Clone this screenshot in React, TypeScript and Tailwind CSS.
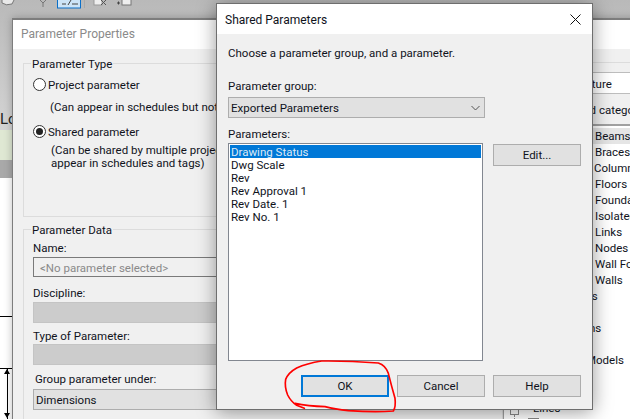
import React from "react";

const F = "font-['Roboto',sans-serif] text-[11.5px] leading-[13px] text-[#10131c]";

function Chevron({ className = "" }: { className?: string }) {
  return (
    <svg width="9" height="6" viewBox="0 0 9 6" className={className}>
      <path d="M.5 1l4 4 4-4" fill="none" stroke="#555" strokeWidth="1" />
    </svg>
  );
}

function Combo({ label, disabled }: { label?: string; disabled?: boolean }) {
  return (
    <div className={`h-[21px] w-full flex items-center pl-[2px] pt-[2px] border ${disabled ? "bg-[#cccccc] border-[#c4c4c4]" : "bg-[#e1e1e1] border-[#adadad]"}`}>
      <span>{label}</span>
    </div>
  );
}

function Btn({ label, ok }: { label: string; ok?: boolean }) {
  return (
    <div className={`w-[88px] h-[22px] flex items-center justify-center bg-[#e1e1e1] ${ok ? "border-2 border-[#0078d7]" : "border border-[#adadad]"}`}>
      {label}
    </div>
  );
}

function Radio({ on }: { on?: boolean }) {
  return (
    <span className="w-[13px] h-[13px] rounded-full border border-[#333] bg-white flex items-center justify-center shrink-0">
      {on && <span className="w-[7px] h-[7px] rounded-full bg-[#222]" />}
    </span>
  );
}

const treeRows: { t: string; pl: string; sel?: boolean }[] = [
  { t: "Beams", pl: "pl-[91px]", sel: true },
  { t: "Braces", pl: "pl-[91px]" },
  { t: "Columns", pl: "pl-[90px]" },
  { t: "Floors", pl: "pl-[91px]" },
  { t: "Foundation", pl: "pl-[91px]" },
  { t: "Isolated", pl: "pl-[91px]" },
  { t: "Links", pl: "pl-[91px]" },
  { t: "Nodes", pl: "pl-[91px]" },
  { t: "Wall Foundations", pl: "pl-[91px]" },
  { t: "Walls", pl: "pl-[91px]" },
  { t: "Trusses", pl: "pl-[53px]" },
  { t: "", pl: "" },
  { t: "Connections", pl: "pl-[33px]" },
  { t: "", pl: "" },
  { t: "Generic Models", pl: "pl-[40px]" },
  { t: "", pl: "" },
  { t: "", pl: "" },
];

export default function App() {
  return (
    <div className={`relative w-[630px] h-[419px] overflow-hidden bg-white ${F}`}>
      {/* application behind the dialogs */}
      <div className="flex flex-col w-full h-full">
        <div className="h-[130px] bg-gradient-to-b from-[#b9b9b9] to-[#d4d4d4] text-[15px] leading-[18px] relative">
          <svg width="140" height="19" viewBox="0 0 140 19" className="absolute left-0 top-0">
            <path d="M2 0v3q4 3 10 1l2-4" fill="#e8e8e8" stroke="#777" />
            <path d="M40 0l3 3 3-3M43 3v4" fill="none" stroke="#777" />
            <rect x="57.5" y="-2" width="23" height="10" fill="#cde4f7" stroke="#0a6fc8" />
            <path d="M62 4h4M68 5l3-5M72 4h6" stroke="#444" fill="none" />
            <path d="M84.500 0v8" stroke="#aaa" />
            <rect x="94" y="-2" width="8" height="7" fill="#eee" stroke="#999" />
            <path d="M101 0l5 5m0-5l-5 5" stroke="#555" fill="none" />
            <rect x="122" y="-2" width="9" height="7" fill="#eee" stroke="#777" />
            <path d="M117 3h3m-1.500-1.500v3" stroke="#444" />
          </svg>
          <span className="absolute left-0 top-[110px] text-[#222]">Lo</span>
        </div>
        <div className="h-[30px] bg-[#dfe8d3]" />
        <div className="h-[18px] bg-[#a9a9a9]" />
        <div className="flex-1 bg-white relative">
          <div className="absolute left-0 top-[138px] w-[12px] border-t border-black" />
          <div className="absolute left-0 top-[190px] w-[12px] border-t border-black" />
          <div className="absolute left-[7px] top-[190px] h-[60px] border-l border-black" />
          <svg width="8" height="6" className="absolute left-[3px] top-[191px]"><path d="M4 0l3 5H1z" fill="#000" /></svg>
          <svg width="8" height="6" className="absolute left-[3px] top-[235px]"><path d="M4 5l3-5H1z" fill="#000" /></svg>
        </div>
      </div>

      {/* Parameter Properties window */}
      <div className="absolute left-[12px] top-[18px] w-[700px] h-[460px] bg-[#f0f0f0] border-t-2 border-l border-[#7d7d7d] flex flex-col shadow-[0_0_8px_rgba(0,0,0,0.25)]">
        <div className="h-[29px] bg-white flex items-center pl-[8px] text-[12px] text-[#8a8a8a]">Parameter Properties</div>
        <div className="flex flex-1">
          {/* left column */}
          <div className="w-[490px] pl-[10px] pt-[14px] flex flex-col gap-[12px]">
            <div className="relative h-[154px] border border-[#dcdcdc] pl-[9px]">
              <span className="absolute left-[7px] -top-[6px] bg-[#f0f0f0] px-[1px]">Parameter Type</span>
              <div className="flex items-center gap-[2px] mt-[14px] h-[13px]"><Radio /><span className="pt-[2px]">Project parameter</span></div>
              <div className="ml-[17px] mt-[10px]">(Can appear in schedules but not in tags)</div>
              <div className="flex items-center gap-[2px] mt-[11px] h-[13px]"><Radio on /><span className="pt-[2px]">Shared parameter</span></div>
              <div className="ml-[18px] mt-[6px]">(Can be shared by multiple projects and families, exported to ODBC, and<br />appear in schedules and tags)</div>
            </div>
            <div className="relative h-[220px] border border-[#dcdcdc] pl-[9px] pr-[10px]">
              <span className="absolute left-[7px] -top-[6px] bg-[#f0f0f0] px-[1px]">Parameter Data</span>
              <div className="mt-[12px]">Name:</div>
              <div className="mt-[2px] h-[20px] flex items-center pl-[6px] pt-[2px] border border-[#7a7a7a] bg-[#f0f0f0] text-[#8a8a8a]">&lt;No parameter selected&gt;</div>
              <div className="mt-[10px]">Discipline:</div>
              <div className="mt-[2px]"><Combo disabled /></div>
              <div className="mt-[7px]">Type of Parameter:</div>
              <div className="mt-[1px]"><Combo disabled /></div>
              <div className="mt-[8px] ml-[2px]">Group parameter under:</div>
              <div className="mt-[3px]"><Combo label="Dimensions" /></div>
            </div>
          </div>
          {/* right column */}
          <div className="flex-1 pt-[13px] relative">
            <div className="border-t border-[#dcdcdc] h-[10px]" />
            <div className="h-[22px] bg-white border-y border-[#bdbdbd] flex items-center pl-[62px] pt-[2px]">Structure</div>
            <div className="h-[30px] flex items-center pl-[8px] pt-[2px]">Hide un-checked categories</div>
            <div className="bg-white border-t-2 border-l border-[#a0a0a0] leading-[16px] pt-[2px]">
              {treeRows.map((r, i) => (
                <div key={i} className={`h-[16px] ${r.pl} ${r.sel ? "bg-[#e5e5e5]" : ""}`}>{r.t || "\u00a0"}</div>
              ))}
              <div className="relative h-[30px]">
                <span className="absolute left-[6px] top-[6px] w-[9px] h-[9px] border border-[#888]" />
                <span className="absolute left-[29px] top-0">Lines</span>
                <span className="absolute left-[10px] top-[15px] h-[8px] border-l border-dotted border-[#888]" />
                <span className="absolute left-[24px] top-[18px] w-[11px] h-[11px] border border-[#888]" />
                <span className="absolute left-[43px] top-[16px]">Masking</span>
              </div>
            </div>
          </div>
        </div>
      </div>

      {/* Shared Parameters dialog */}
      <div className="absolute left-[216px] top-[3px] w-[377px] h-[407px] bg-[#f0f0f0] border border-[#6e6e6e] shadow-[0_2px_18px_rgba(0,0,0,0.4)] flex flex-col">
        <div className="h-[30px] bg-white flex items-center justify-between pl-[8px] pr-[11px] text-[12px] shrink-0">
          <span className="pt-[2px]">Shared Parameters</span>
          <svg width="11" height="11" viewBox="0 0 11 11"><path d="M.5.5l10 10m0-10l-10 10" stroke="#111" strokeWidth="1" fill="none" /></svg>
        </div>
        <div className="flex-1 flex flex-col pl-[11px] pr-[11px] pt-[13px]">
          <div>Choose a parameter group, and a parameter.</div>
          <div className="mt-[20px]">Parameter group:</div>
          <div className="mt-[4px] w-[257px] h-[21px] flex items-center justify-between pl-[2px] pr-[4px] border border-[#adadad] bg-[#e1e1e1]">
            <span className="pt-[2px]">Exported Parameters</span>
            <Chevron />
          </div>
          <div className="mt-[10px]">Parameters:</div>
          <div className="mt-[2px] flex gap-[10px] items-start">
            <div className="w-[255px] h-[218px] bg-white border border-[#828790] p-[1px] leading-[15px]">
              <div className="h-[13px] bg-[#0078d7] text-[#dfeaf5] pl-[1px]">Drawing Status</div>
              {["Dwg Scale", "Rev", "Rev Approval 1", "Rev Date. 1", "Rev No. 1"].map((t) => (
                <div key={t} className="h-[13px] pl-[1px]">{t}</div>
              ))}
            </div>
            <div className="mt-[1px]"><Btn label="Edit..." /></div>
          </div>
          <div className="mt-[14px] flex justify-end gap-[8px]">
            <Btn label="OK" ok />
            <Btn label="Cancel" />
            <Btn label="Help" />
          </div>
        </div>
      </div>

      {/* red hand-drawn circle */}
      <svg width="220" height="79" viewBox="0 0 660 237" className="absolute left-[215px] top-[340px] pointer-events-none">
        <path
          d="M268 205 L245 196 Q228 185 218 165 Q208 140 212 118 Q220 98 245 84 Q275 70 320 63 Q400 62 490 69 Q512 76 520 100 Q530 140 540 175 Q543 200 535 213 Q480 217 400 212 Q360 208 330 200 Q280 198 240 190"
          fill="none"
          stroke="#ff0000"
          strokeWidth="5"
          strokeLinecap="round"
        />
      </svg>
    </div>
  );
}
